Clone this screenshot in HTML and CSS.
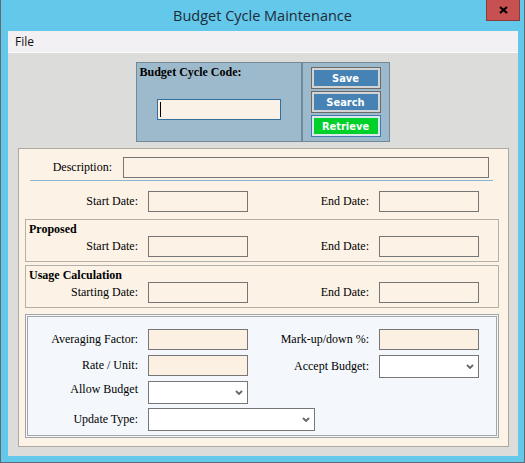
FILE: index.html
```html
<!DOCTYPE html>
<html>
<head>
<meta charset="utf-8">
<title>Budget Cycle Maintenance</title>
<link rel="stylesheet" href="styles.css">
</head>
<body>
<div class="window">
  <div class="titlebar">
    <span class="title">Budget Cycle Maintenance</span>
    <div class="close">
      <svg width="9" height="8" viewBox="0 0 9 8"><path d="M1 1 L8 7 M8 1 L1 7" stroke="#000" stroke-width="2.2" fill="none"/></svg>
    </div>
  </div>
  <div class="menubar"><span class="menu-item">File</span></div>
  <div class="content">
    <div class="codebox">
      <div class="code-left">
        <div class="code-label">Budget Cycle Code:</div>
        <div class="code-field"><span class="caret"></span></div>
      </div>
      <div class="code-right">
        <button class="btn btn-blue">Save</button>
        <button class="btn btn-blue">Search</button>
        <button class="btn btn-green">Retrieve</button>
      </div>
    </div>
    <div class="panel">
      <div class="desc-row">
        <span class="lbl desc-lbl">Description:</span>
        <div class="field desc-field"></div>
      </div>
      <div class="divider"></div>
      <div class="row main-row">
        <span class="lbl">Start Date:</span>
        <div class="field"></div>
        <span class="lbl">End Date:</span>
        <div class="field"></div>
      </div>
      <div class="group first-group">
        <div class="group-title">Proposed</div>
        <div class="row">
          <span class="lbl">Start Date:</span>
          <div class="field"></div>
          <span class="lbl">End Date:</span>
          <div class="field"></div>
        </div>
      </div>
      <div class="group second-group">
        <div class="group-title">Usage Calculation</div>
        <div class="row">
          <span class="lbl">Starting Date:</span>
          <div class="field"></div>
          <span class="lbl">End Date:</span>
          <div class="field"></div>
        </div>
      </div>
      <div class="calc">
        <div class="row calc-row r1">
          <span class="lbl">Averaging Factor:</span>
          <div class="field"></div>
          <span class="lbl">Mark-up/down %:</span>
          <div class="field"></div>
        </div>
        <div class="row calc-row r2">
          <span class="lbl">Rate / Unit:</span>
          <div class="field"></div>
          <span class="lbl tall">Accept Budget:</span>
          <div class="select"><svg width="8" height="5" viewBox="0 0 8 5"><polyline points="1,1 4,4 7,1" fill="none" stroke="#666" stroke-width="1.8"/></svg></div>
        </div>
        <div class="row calc-row r3">
          <span class="lbl short">Allow Budget</span>
          <div class="select"><svg width="8" height="5" viewBox="0 0 8 5"><polyline points="1,1 4,4 7,1" fill="none" stroke="#666" stroke-width="1.8"/></svg></div>
        </div>
        <div class="row calc-row r4">
          <span class="lbl tall">Update Type:</span>
          <div class="select wide-select"><svg width="8" height="5" viewBox="0 0 8 5"><polyline points="1,1 4,4 7,1" fill="none" stroke="#666" stroke-width="1.8"/></svg></div>
        </div>
      </div>
    </div>
  </div>
</div>
</body>
</html>
```

FILE: styles.css
```css
html, body {
  margin: 0;
  padding: 0;
  background: #64C8EB;
}

.window {
  width: 525px;
  height: 463px;
  box-sizing: border-box;
  background: #64C8EB;
  border: 1px solid #5E6B72;
  border-top: none;
  padding: 0 6px 6px 7px;
  display: flex;
  flex-direction: column;
}

.titlebar {
  height: 31px;
  margin: 0 -6px 0 -7px;
  position: relative;
  display: flex;
  align-items: center;
  justify-content: center;
}

.title {
  font-family: "Open Sans", "Noto Sans", sans-serif;
  font-size: 14.5px;
  line-height: 20px;
  color: #1E2B38;
  padding-top: 1px;
}

.close {
  position: absolute;
  top: 0;
  right: 4px;
  width: 34px;
  height: 21px;
  box-sizing: border-box;
  background: #C75050;
  border: 1px solid #8B3A3A;
  border-top: none;
  display: flex;
  align-items: center;
  justify-content: center;
}

.menubar {
  height: 21px;
  background: #F3F0F4;
  border-bottom: 1px solid #FBFAFB;
  display: flex;
  align-items: center;
  padding-left: 7px;
}

.menu-item {
  font-family: "Open Sans", "Noto Sans", sans-serif;
  font-size: 12px;
  color: #111;
}

.content {
  flex: 1;
  background: #DCDDDB;
  padding: 9px 9px 9px 10px;
  display: flex;
  flex-direction: column;
  min-height: 0;
}

.codebox {
  align-self: center;
  display: flex;
  width: 254px;
  height: 80px;
  box-sizing: border-box;
  border: 1px solid #72899A;
  background: #9DB9CC;
  margin-right: 2px;
}

.code-left {
  width: 165px;
  box-sizing: border-box;
  border-right: 1px solid #72899A;
  padding: 2px 0 0 3px;
}

.code-label {
  font-family: "Liberation Serif", serif;
  font-weight: bold;
  font-size: 12px;
  line-height: 14px;
  color: #000;
}

.code-field {
  width: 124px;
  height: 21px;
  box-sizing: border-box;
  margin: 20px 0 0 17px;
  border: 1px solid #336E9E;
  background: #FBF2E7;
  display: flex;
  align-items: center;
  padding-left: 2px;
}

.caret {
  width: 1px;
  height: 15px;
  background: #000;
}

.code-right {
  width: 87px;
  box-sizing: border-box;
  border-left: 1px solid #72899A;
  display: flex;
  flex-direction: column;
  align-items: center;
  padding-top: 4px;
  gap: 2px;
}

.btn {
  width: 70px;
  height: 22px;
  box-sizing: border-box;
  padding: 0;
  margin: 0;
  font-family: "DejaVu Sans Condensed", "DejaVu Sans", sans-serif;
  font-weight: bold;
  font-size: 11px;
  color: #fff;
  cursor: pointer;
}

.btn-blue {
  background: #4682B4;
  border: 1px solid #6A6A6A;
  box-shadow: inset 0 0 0 2px #D3D3D3;
}

.btn-green {
  background: #00D02A;
  border: 1px solid #4178AE;
  box-shadow: inset 0 0 0 2px #DCE6EE;
}

.panel {
  flex: 1;
  margin-top: 6px;
  border: 1px solid #ABA8A2;
  background: #FCF2E6;
  padding: 8px 0 8px 0;
  display: flex;
  flex-direction: column;
  min-height: 0;
}

.lbl {
  font-family: "Liberation Serif", serif;
  font-size: 12px;
  line-height: 21px;
  color: #000;
  text-align: right;
  padding-right: 10px;
  white-space: nowrap;
}

.desc-row {
  display: flex;
  height: 21px;
}

.desc-lbl {
  width: 104px;
  box-sizing: border-box;
  padding-right: 11px;
}

.field {
  height: 21px;
  box-sizing: border-box;
  border: 1px solid #767676;
  background: #FCF2E6;
}

.desc-field {
  width: 366px;
}

.divider {
  height: 1px;
  background: #8FB5D3;
  margin: 2px 15px 0 11px;
}

.row {
  display: grid;
  grid-template-columns: var(--l1) 100px 131px 100px;
  align-items: start;
}

.row .lbl {
  box-sizing: border-box;
}

.main-row {
  --l1: 129px;
  margin-top: 10px;
}

.group {
  border: 1px solid #B3AFA9;
  margin: 0 9px 0 6px;
  padding: 2px 0 4px 0;
}

.group .row {
  --l1: 122px;
}

.first-group {
  margin-top: 7px;
}

.second-group {
  margin-top: 3px;
}

.group-title {
  font-family: "Liberation Serif", serif;
  font-weight: bold;
  font-size: 12px;
  line-height: 14px;
  color: #000;
  padding-left: 3px;
}

.calc {
  margin: 6px 9px 0 6px;
  border: 3px double #A5A5A5;
  background: #F4F8FC;
  padding: 12px 0 4px 0;
}

.calc-row {
  --l1: 120px;
}

.calc .field {
  background: #FCF0E3;
}

.r2 {
  margin-top: 5px;
}

.r3 {
  margin-top: 3px;
}

.r4 {
  margin-top: 4px;
  grid-template-columns: var(--l1) 167px;
}

.lbl.tall {
  line-height: 22px;
}

.lbl.short {
  line-height: 16px;
}

.select {
  height: 23px;
  box-sizing: border-box;
  border: 1px solid #767676;
  background: #fff;
  display: flex;
  align-items: center;
  justify-content: flex-end;
  padding-right: 4px;
}
```
